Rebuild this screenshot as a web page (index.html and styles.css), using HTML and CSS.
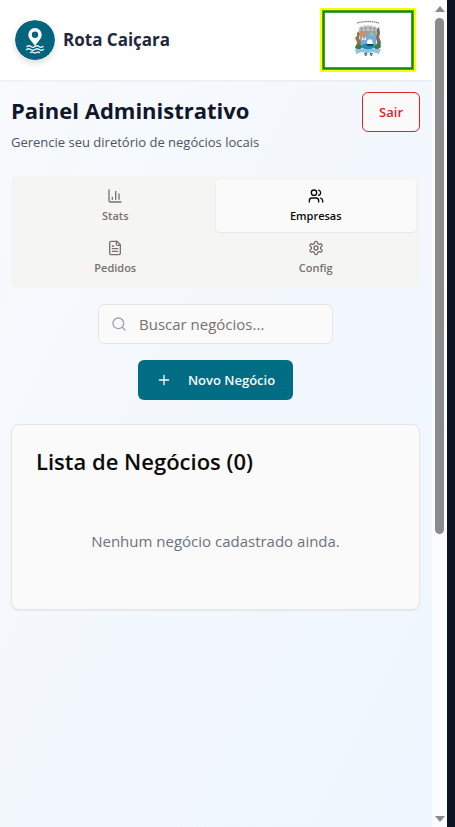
FILE: index.html
```html
<!DOCTYPE html>
<html lang="pt-BR">
<head>
<meta charset="utf-8">
<meta name="viewport" content="width=device-width, initial-scale=1">
<title>Rota Caiçara</title>
<link rel="stylesheet" href="styles.css">
</head>
<body>
<div class="app">
  <header class="topbar">
    <a class="brand" href="#">
      <svg class="brand-logo" viewBox="0 0 40 40" aria-hidden="true">
        <circle cx="20" cy="20" r="20" fill="#03657d"/>
        <path fill="#fff" fill-rule="evenodd" d="M20 8a6.700 6.700 0 0 0-6.700 6.700C13.300 19 17.500 21.500 20 26.200 22.500 21.500 26.700 19 26.700 14.700A6.700 6.700 0 0 0 20 8Zm0 3.600a3.200 3.200 0 1 1 0 6.400 3.200 3.200 0 0 1 0-6.400Z"/>
        <path fill="none" stroke="#e6f3f5" stroke-width="1.500" stroke-linecap="round" d="M12 26.500q2-1.500 4 0t4 0 4 0 4 0M11.500 29.500q2.100-1.500 4.200 0t4.300 0 4.300 0 4.200 0M15.500 32.500q1.500-1 3 0t3 0 3 0"/>
      </svg>
      <span class="brand-name">Rota Caiçara</span>
    </a>
    <div class="flag">
      <svg class="crest" viewBox="0 0 28 36" role="img" aria-label="Brasão do município">
        <path d="M3 3Q14 0 25 3" fill="none" stroke="#888" stroke-width="1.300" stroke-dasharray="1.600 .5"/>
        <path d="M5 8l2-2 2 1 1.500-2 2 1 1.500-1.500L15.500 6l2-1L19 7l2-1 2 2v4H5Z" fill="#c3c2c5"/>
        <path d="M6 9h3m1-1h3m2 0h3m1 1h3M8 7v4m4-4v4m4-4v4m4-4v4" stroke="#85858b" stroke-width=".7"/>
        <path d="M6 11h16v13q-1 5-8 6-7-1-8-6Z" fill="#72aedc"/>
        <path d="M6 11h8v4l-4 3-4-2Z" fill="#79a7c4"/>
        <path d="M7 12l3-1 3 2-2 3-4 1Z" fill="#e38a52"/>
        <path d="M15 11h6v5l-4-1Z" fill="#6eb6a0"/>
        <path d="M16 12l3 1 1 3-4-1Z" fill="#dbb158"/>
        <path d="M8 17h4v3H8Z" fill="#eee7d4"/>
        <path d="M9 18h2" stroke="#d24d3c"/>
        <path d="M8 25q4-3 12 0l-1 3q-5 3-10 0Z" fill="#228bb5"/>
        <path d="M13 21q2-3 5-1l1 4h-6Z" fill="#fff"/>
        <path d="M12 24h8l-2 2h-4Z" fill="#263d4c"/>
        <path d="M3 13l2-2 1 3-1 4 2 4-1 6H2l1-6-2-4 2-2Z" fill="#a66b45"/>
        <path d="M23 9l2-2 1 6-1 4 2 5-1 6h-4l1-6-1-4Z" fill="#776a69"/>
        <path d="M3 15l2 2-2 3m20-7 2 3-2 4m2 3-2 3" stroke="#ce5547" stroke-width="1" fill="none"/>
        <path d="M2 25q4-2 7 2l-4 3-4-2Zm24-1q-4-1-7 3l4 3 4-3Z" fill="#3c7950"/>
        <path d="M1 29q6 1 8-1 5 3 10 0 3 2 8 1l-2 5q-5-2-8-2-4 2-9 0-3 1-6 2Z" fill="#8bc6e7"/>
        <path d="M10 34l3-1m3 0 3 1m-8 2 2-2m3 0 2 2" stroke="#4d675c" stroke-width="1.200"/>
      </svg>
    </div>
  </header>
  <main class="content">
    <div class="page-head">
      <div>
        <h1 class="page-title">Painel Administrativo</h1>
        <p class="page-subtitle">Gerencie seu diretório de negócios locais</p>
      </div>
      <button class="btn btn-outline" type="button">Sair</button>
    </div>
    <div class="tabs" role="tablist">
      <button class="tab" type="button" role="tab" aria-selected="false">
        <svg class="icon" viewBox="0 0 24 24" aria-hidden="true"><path d="M3 3v16a2 2 0 0 0 2 2h16M18 17V9M13 17V5M8 17v-3"/></svg>
        Stats
      </button>
      <button class="tab tab-active" type="button" role="tab" aria-selected="true">
        <svg class="icon" viewBox="0 0 24 24" aria-hidden="true"><path d="M16 21v-2a4 4 0 0 0-4-4H6a4 4 0 0 0-4 4v2"/><circle cx="9" cy="7" r="4"/><path d="M22 21v-2a4 4 0 0 0-3-3.870M16 3.130a4 4 0 0 1 0 7.750"/></svg>
        Empresas
      </button>
      <button class="tab" type="button" role="tab" aria-selected="false">
        <svg class="icon" viewBox="0 0 24 24" aria-hidden="true"><path d="M15 2H6a2 2 0 0 0-2 2v16a2 2 0 0 0 2 2h12a2 2 0 0 0 2-2V7Z"/><path d="M14 2v4a2 2 0 0 0 2 2h4M10 9H8M16 13H8M16 17H8"/></svg>
        Pedidos
      </button>
      <button class="tab" type="button" role="tab" aria-selected="false">
        <svg class="icon" viewBox="0 0 24 24" aria-hidden="true"><path d="M12.220 2h-.44a2 2 0 0 0-2 2v.18a2 2 0 0 1-1 1.730l-.43.25a2 2 0 0 1-2 0l-.15-.08a2 2 0 0 0-2.730.73l-.22.38a2 2 0 0 0 .73 2.730l.15.1a2 2 0 0 1 1 1.720v.51a2 2 0 0 1-1 1.740l-.15.09a2 2 0 0 0-.73 2.730l.22.38a2 2 0 0 0 2.730.73l.15-.08a2 2 0 0 1 2 0l.43.25a2 2 0 0 1 1 1.730V20a2 2 0 0 0 2 2h.44a2 2 0 0 0 2-2v-.18a2 2 0 0 1 1-1.730l.43-.25a2 2 0 0 1 2 0l.15.08a2 2 0 0 0 2.730-.73l.22-.39a2 2 0 0 0-.73-2.730l-.15-.08a2 2 0 0 1-1-1.740v-.5a2 2 0 0 1 1-1.740l.15-.09a2 2 0 0 0 .73-2.730l-.22-.38a2 2 0 0 0-2.730-.73l-.15.08a2 2 0 0 1-2 0l-.43-.25a2 2 0 0 1-1-1.730V4a2 2 0 0 0-2-2z"/><circle cx="12" cy="12" r="3"/></svg>
        Config
      </button>
    </div>
    <div class="actions">
      <label class="search">
        <svg class="icon" viewBox="0 0 24 24" aria-hidden="true"><circle cx="11" cy="11" r="8"/><path d="m21 21-4.300-4.300"/></svg>
        <input class="search-input" type="search" placeholder="Buscar negócios..." aria-label="Buscar negócios">
      </label>
      <button class="btn btn-primary" type="button">
        <svg class="icon" viewBox="0 0 24 24" aria-hidden="true"><path d="M5 12h14M12 5v14"/></svg>
        Novo Negócio
      </button>
    </div>
    <section class="card">
      <h2 class="card-title">Lista de Negócios (0)</h2>
      <p class="card-empty">Nenhum negócio cadastrado ainda.</p>
    </section>
  </main>
</div>
<div class="scrollbar" aria-hidden="true">
  <svg class="arrow" viewBox="0 0 15 18"><path d="M3 12h10L8 6Z"/></svg>
  <div class="track"><div class="thumb"></div></div>
  <svg class="arrow" viewBox="0 0 15 18"><path d="M3 7h10L8 13Z"/></svg>
</div>
</body>
</html>
```
FILE: styles.css
```css
* {
  box-sizing: border-box;
}

body {
  margin: 0;
  min-height: 100vh;
  display: flex;
  padding-right: 8px;
  background: #0c1424;
  color: #0c0a09;
  font-family: "Open Sans", "Noto Sans", sans-serif;
}

h1, h2, p {
  margin: 0;
}

button, input {
  font: inherit;
}

.app {
  flex: 1;
  min-width: 0;
  background: linear-gradient(to bottom right, #f8fafc, #eff6ff);
}

.topbar {
  display: flex;
  align-items: center;
  justify-content: space-between;
  padding: 8px 16px 8px 15px;
  background: #fff;
  box-shadow: 0 1px 2px rgb(0 0 0 / 6%);
}

.brand {
  display: flex;
  align-items: center;
  gap: 8px;
  color: #1e293b;
  text-decoration: none;
}

.brand-logo {
  width: 40px;
  height: 40px;
  border-radius: 50%;
  box-shadow: 0 3px 6px rgb(0 0 0 / 14%);
}

.brand-name {
  font-size: 17px;
  line-height: 28px;
  font-weight: 700;
}

.flag {
  display: flex;
  align-items: center;
  justify-content: center;
  width: 96px;
  height: 64px;
  padding-bottom: 4px;
  border: 2px solid #ff0;
  box-shadow: inset 0 0 0 1px #58ad0a, inset 0 0 0 2px #078a12, inset 0 0 0 3px #3fa347;
}

.crest {
  width: 28px;
  height: 36px;
}

.content {
  padding: 12px 12px 24px 11px;
}

.page-head {
  display: flex;
  align-items: flex-start;
  justify-content: space-between;
  margin-bottom: 24px;
}

.page-title {
  margin-bottom: 4px;
  color: #0f172a;
  font-size: 22px;
  line-height: 36px;
  font-weight: 700;
}

.page-subtitle {
  color: #475569;
  font-size: 13px;
  line-height: 20px;
}

.btn {
  display: inline-flex;
  align-items: center;
  justify-content: center;
  height: 40px;
  padding: 0 16px;
  border: 0;
  border-radius: 6px;
  font-size: 13px;
  line-height: 20px;
  font-weight: 600;
}

.btn-outline {
  border: 1px solid #dc2626;
  background: #fafafa;
  color: #dc2626;
}

.btn-primary {
  gap: 16px;
  padding: 0 18px;
  background: #006d85;
  color: #fafafa;
}

.icon {
  flex: none;
  width: 16px;
  height: 16px;
  fill: none;
  stroke: currentColor;
  stroke-width: 2;
  stroke-linecap: round;
  stroke-linejoin: round;
}

.tabs {
  display: grid;
  grid-template-columns: 1fr 1fr;
  padding: 4px;
  border-radius: 6px;
  background: #f5f5f4;
}

.tab {
  display: flex;
  flex-direction: column;
  align-items: center;
  gap: 4px;
  padding: 8px;
  border: 0;
  border-radius: 4px;
  background: none;
  color: #78716c;
  font-size: 11px;
  line-height: 16px;
  font-weight: 600;
}

.tab-active {
  background: #fafafa;
  color: #0c0a09;
  box-shadow: 0 1px 2px rgb(0 0 0 / 6%);
}

.actions {
  display: flex;
  flex-direction: column;
  align-items: center;
  gap: 16px;
  margin: 16px 0 24px;
}

.search {
  display: flex;
  align-items: center;
  gap: 12px;
  width: 235px;
  max-width: 100%;
  height: 40px;
  padding: 0 12px;
  border: 1px solid #e7e5e4;
  border-radius: 6px;
  background: #fafafa;
  color: #9ca3af;
}

.search-input {
  flex: 1;
  min-width: 0;
  padding: 0;
  border: 0;
  outline: 0;
  background: none;
  color: #0c0a09;
  font-size: 15px;
  line-height: 24px;
}

.search-input::placeholder {
  color: #78716c;
}

.card {
  padding: 24px;
  border: 1px solid #e7e5e4;
  border-radius: 8px;
  background: #fafafa;
  box-shadow: 0 1px 2px rgb(0 0 0 / 6%);
}

.card-title {
  margin-bottom: 24px;
  font-size: 22px;
  line-height: 24px;
  font-weight: 600;
}

.card-empty {
  padding: 32px 0;
  color: #6b7280;
  font-size: 15px;
  line-height: 24px;
  text-align: center;
}

.scrollbar {
  display: flex;
  flex-direction: column;
  width: 15px;
  background: #fcfcfc;
}

.arrow {
  width: 15px;
  height: 18px;
  fill: #8b8b8b;
}

.track {
  flex: 1;
  padding: 0 3px;
}

.thumb {
  height: 516px;
  border-radius: 5px;
  background: #8b8b8b;
}
```
